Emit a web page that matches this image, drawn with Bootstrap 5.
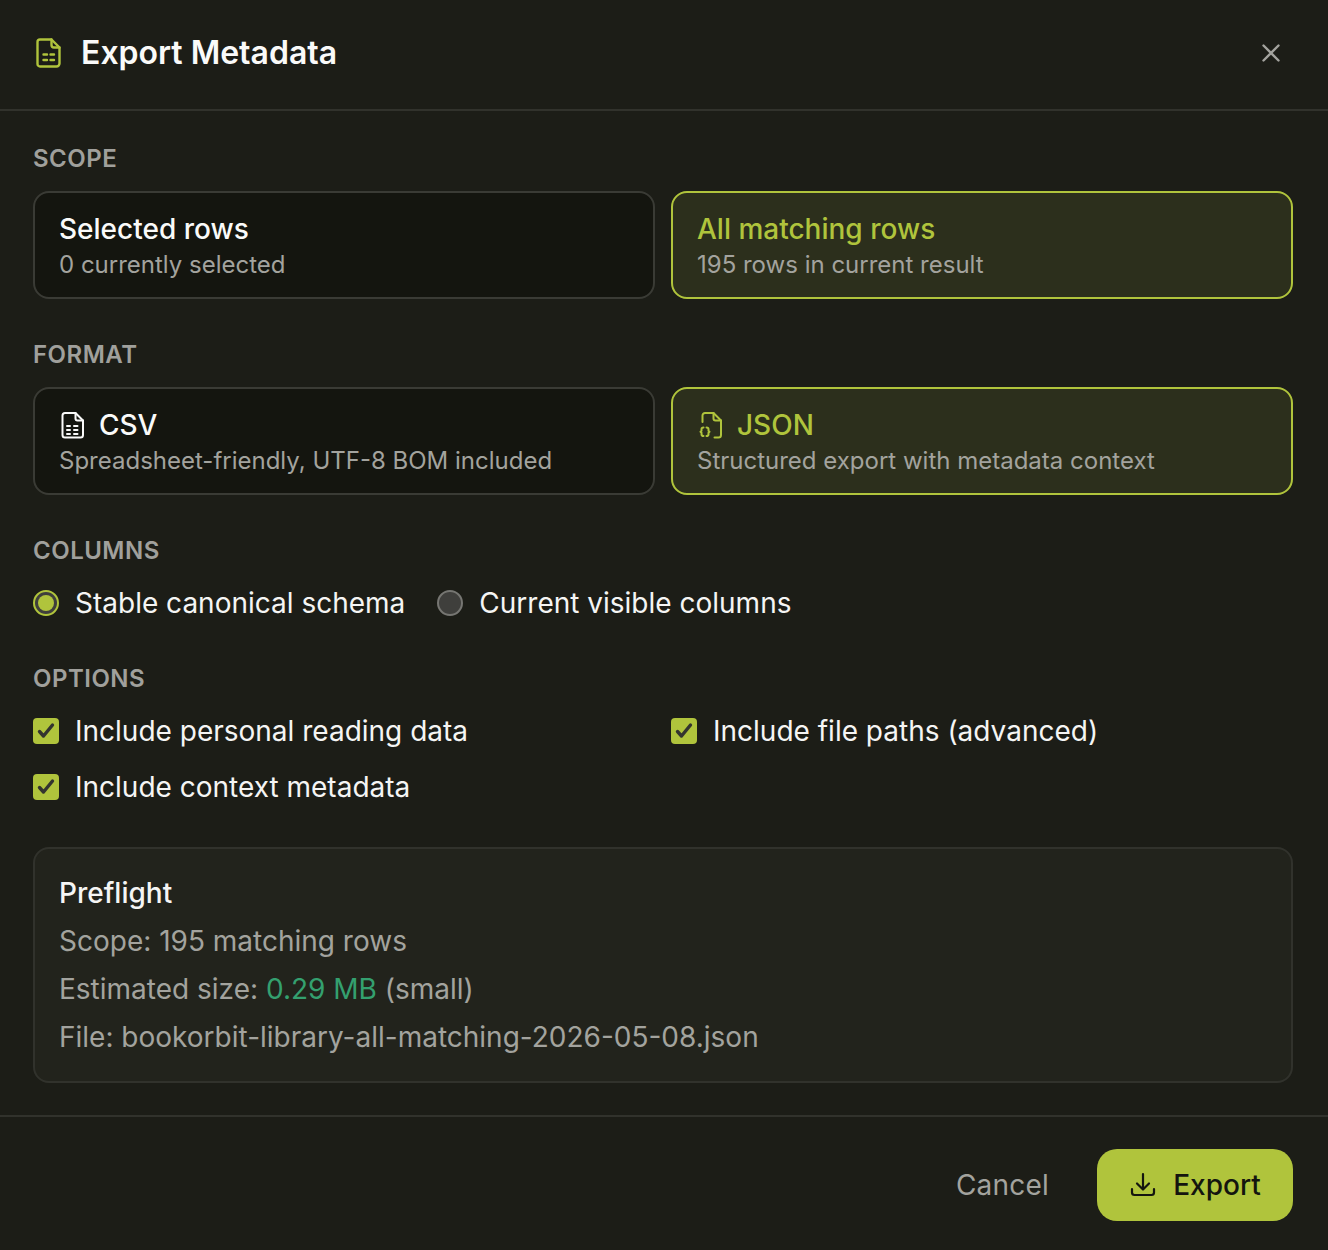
<!DOCTYPE html>
<html lang="en"><head><meta charset="utf-8"><title>Export Metadata</title>
<link href="https://cdn.jsdelivr.net/npm/bootstrap@5.3.0/dist/css/bootstrap.min.css" rel="stylesheet">
<style>
html,body{height:100%;background:#1c1d17;}
body{font-family:Inter,"Liberation Sans",sans-serif;color:#f5f5f4;font-size:28px;line-height:40px;width:1328px;height:1250px;overflow:hidden}
.dlg{height:1250px;background:#1c1d17}
.dlg-head{height:111px;padding:0 34px 3px;border-bottom:2px solid #31322c;gap:17px}
.dlg-title{font-size:32px;line-height:44px;font-weight:600;color:#fafaf9;margin:0}
.dlg-body{padding:32px 35px 32px 33px}
.sec-label{font-size:24px;line-height:32px;font-weight:600;color:#a0a09c;letter-spacing:.5px;margin-bottom:16px}
.opt-grid{display:grid;grid-template-columns:1fr 1fr;column-gap:16px;margin-bottom:40px}
.opt-card{height:108px;border:2px solid #3a3b35;border-radius:16px;background:#14150f;padding:18px 24px 0}
.opt-card.on{border-color:#b0c43c;background:#2c2f1c}
.opt-name{font-size:28px;line-height:36px;font-weight:500;color:#fafaf9;gap:12px}
.on .opt-name{color:#b0c43c}
.opt-sub{font-size:24px;line-height:36px;color:#a3a39e}
.radio-row{gap:32px;margin-bottom:40px;height:40px}
.chk-line{gap:16px;font-size:28px;line-height:40px;color:#f5f5f4}
.mk{width:26px;height:26px;flex:none}
.chk-grid{display:grid;grid-template-columns:1fr 1fr;column-gap:16px;row-gap:16px;margin-bottom:40px}
.pre-box{height:236px;border:2px solid #31322c;border-radius:16px;background:#22231c;padding:24px 24px;}
.pre-title{font-size:28px;line-height:40px;font-weight:500;color:#f5f5f4;margin-bottom:8px}
.pre-line{font-size:28px;line-height:40px;color:#a3a39e;margin-bottom:8px}
.pre-ok{color:#34a06f}
.dlg-foot{border-top:2px solid #31322c;height:135px;padding:3px 35px 0;gap:32px}
.btn-cancel{color:#a3a39e;font-size:28px;line-height:40px;padding:16px 16px;border:0;background:none;letter-spacing:.2px}
.btn-export{background:#b0c43c;color:#14150f;font-size:28px;line-height:40px;font-weight:500;border:0;border-radius:20px;height:72px;width:196px;gap:16px}
.btn-export:hover{background:#b0c43c;color:#14150f}
.btn-x{background:none;border:0;padding:0;width:28px;height:28px;margin-right:9px;line-height:0}
</style></head>
<body>
<div class="dlg d-flex flex-column">
  <div class="dlg-head d-flex align-items-center">
    <svg width="30" height="30" viewBox="0 0 30 30" fill="none" stroke="#b0c43c" stroke-width="2.4" stroke-linecap="round" stroke-linejoin="round"><path d="M6 1.500h11.500l8 8V25.500a3 3 0 0 1-3 3H6a2.500 2.500 0 0 1-2.500-2.500V4A2.500 2.500 0 0 1 6 1.500z"/><path d="M17.500 1.500V7a2.500 2.500 0 0 0 2.500 2.500h5.500"/><path d="M9.500 16.500h3.500M16.500 16.500h3.500M9.500 22h3.500M16.500 22h3.500"/></svg>
    <h1 class="dlg-title flex-grow-1">Export Metadata</h1>
    <button class="btn-x" aria-label="Close"><svg width="28" height="28" viewBox="0 0 28 28" fill="none" stroke="#a3a39e" stroke-width="2.400" stroke-linecap="round"><path d="M6.500 6.500l15 15M21.500 6.500l-15 15"/></svg></button>
  </div>
  <div class="dlg-body flex-grow-1">
    <div class="sec-label">SCOPE</div>
    <div class="opt-grid">
      <div class="opt-card"><div class="opt-name">Selected rows</div><div class="opt-sub">0 currently selected</div></div>
      <div class="opt-card on"><div class="opt-name">All matching rows</div><div class="opt-sub">195 rows in current result</div></div>
    </div>
    <div class="sec-label">FORMAT</div>
    <div class="opt-grid">
      <div class="opt-card"><div class="opt-name d-flex align-items-center"><svg width="28" height="28" viewBox="0 0 28 28" fill="none" stroke="#fafaf9" stroke-width="2" stroke-linecap="round" stroke-linejoin="round"><path d="M6 2h10.500l7.500 7.500V24a2.500 2.500 0 0 1-2.500 2.500H6A2.500 2.500 0 0 1 3.500 24V4.500A2.500 2.500 0 0 1 6 2z"/><path d="M16.500 2V7.500a2 2 0 0 0 2 2H24"/><path d="M8 15h3M15 15h3.500M8 19h3M15 19h3.500M8 23h3M15 23h3.500"/></svg>CSV</div><div class="opt-sub">Spreadsheet-friendly, UTF-8 BOM included</div></div>
      <div class="opt-card on"><div class="opt-name d-flex align-items-center"><svg width="28" height="28" viewBox="0 0 28 28" fill="none" stroke="#b0c43c" stroke-width="2" stroke-linecap="round" stroke-linejoin="round"><path d="M5.500 11V4.500A2.500 2.500 0 0 1 8 2h8.500l7.500 7.500V24a2.500 2.500 0 0 1-2.500 2.500h-4"/><path d="M16.500 2V7.500a2 2 0 0 0 2 2H24"/><path d="M6.500 16.500c-1.500 0-2 .7-2 1.800v1.500l-1 1 1 1v1.500c0 1.100.5 1.800 2 1.800"/><path d="M9.500 16.500c1.500 0 2 .7 2 1.800v1.500l1 1-1 1v1.500c0 1.100-.5 1.800-2 1.800"/></svg>JSON</div><div class="opt-sub">Structured export with metadata context</div></div>
    </div>
    <div class="sec-label">COLUMNS</div>
    <div class="radio-row d-flex">
      <label class="chk-line d-flex align-items-center"><svg class="mk" viewBox="0 0 26 26"><circle cx="13" cy="13" r="12" fill="#3f3f3c" stroke="#b0c43c" stroke-width="2"/><circle cx="13" cy="13" r="8" fill="#b0c43c"/></svg>Stable canonical schema</label>
      <label class="chk-line d-flex align-items-center"><svg class="mk" viewBox="0 0 26 26"><circle cx="13" cy="13" r="12" fill="#3f3f3c" stroke="#767672" stroke-width="2"/></svg>Current visible columns</label>
    </div>
    <div class="sec-label">OPTIONS</div>
    <div class="chk-grid">
      <label class="chk-line d-flex align-items-center"><svg class="mk" viewBox="0 0 26 26"><rect width="26" height="26" rx="4" fill="#b0c43c"/><path d="M6.500 13.500l4 4.500 9-11" fill="none" stroke="#33342f" stroke-width="3.400" stroke-linecap="round" stroke-linejoin="round"/></svg>Include personal reading data</label>
      <label class="chk-line d-flex align-items-center"><svg class="mk" viewBox="0 0 26 26"><rect width="26" height="26" rx="4" fill="#b0c43c"/><path d="M6.500 13.500l4 4.500 9-11" fill="none" stroke="#33342f" stroke-width="3.400" stroke-linecap="round" stroke-linejoin="round"/></svg>Include file paths (advanced)</label>
      <label class="chk-line d-flex align-items-center"><svg class="mk" viewBox="0 0 26 26"><rect width="26" height="26" rx="4" fill="#b0c43c"/><path d="M6.500 13.500l4 4.500 9-11" fill="none" stroke="#33342f" stroke-width="3.400" stroke-linecap="round" stroke-linejoin="round"/></svg>Include context metadata</label>
    </div>
    <div class="pre-box">
      <div class="pre-title">Preflight</div>
      <div class="pre-line">Scope: 195 matching rows</div>
      <div class="pre-line">Estimated size: <span class="pre-ok">0.29 MB</span> (small)</div>
      <div class="pre-line">File: bookorbit-library-all-matching-2026-05-08.json</div>
    </div>
  </div>
  <div class="dlg-foot d-flex align-items-center justify-content-end">
    <button class="btn btn-cancel">Cancel</button>
    <button class="btn btn-export d-flex align-items-center justify-content-center"><svg width="28" height="28" viewBox="0 0 28 28" fill="none" stroke="#14150f" stroke-width="2.200" stroke-linecap="round" stroke-linejoin="round"><path d="M14 3v15M8 12.500l6 6 6-6"/><path d="M3 18v3.500a2.500 2.500 0 0 0 2.500 2.500h17a2.500 2.500 0 0 0 2.500-2.500V18"/></svg>Export</button>
  </div>
</div>
</body></html>
